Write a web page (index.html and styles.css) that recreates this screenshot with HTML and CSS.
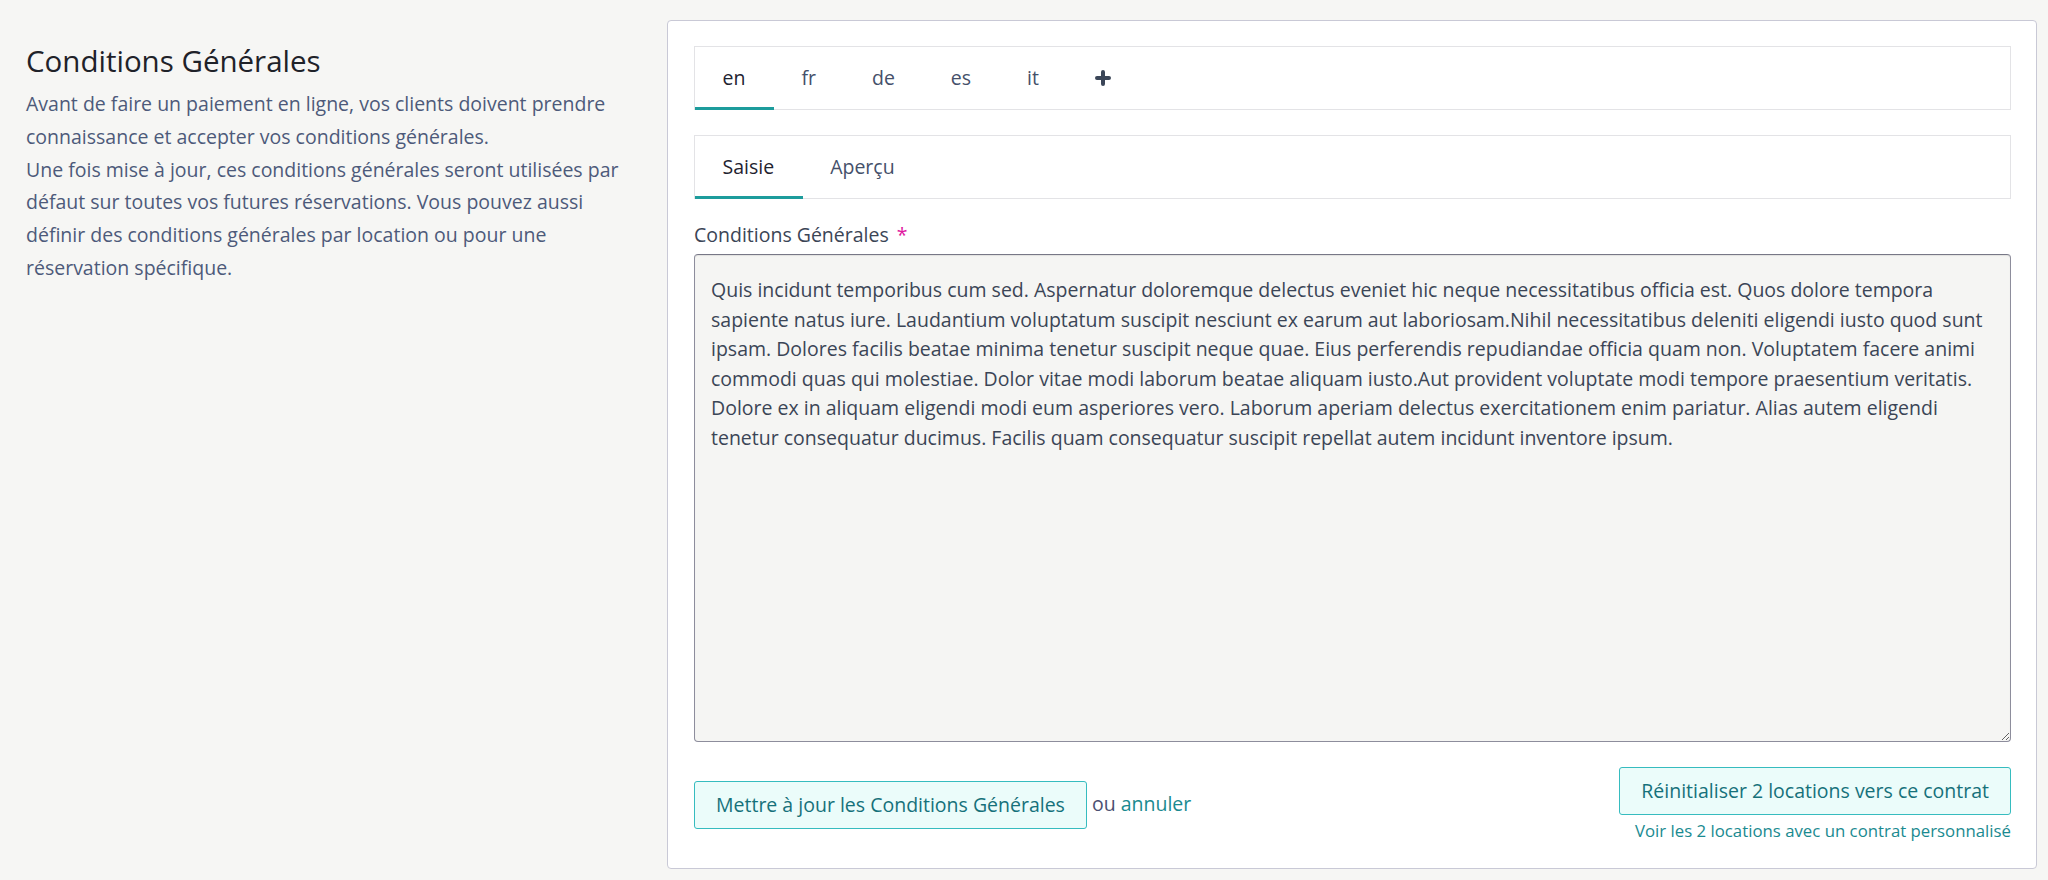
FILE: index.html
```html
<!DOCTYPE html>
<html lang="fr">
<head>
<meta charset="utf-8">
<title>Conditions Générales</title>
<link rel="stylesheet" href="styles.css">
</head>
<body>
<div class="page">
  <section class="intro">
    <h2 class="intro-title">Conditions Générales</h2>
    <p class="intro-text">Avant de faire un paiement en ligne, vos clients doivent prendre connaissance et accepter vos conditions générales.<br>Une fois mise à jour, ces conditions générales seront utilisées par défaut sur toutes vos futures réservations. Vous pouvez aussi définir des conditions générales par location ou pour une réservation spécifique.</p>
  </section>
  <section class="panel">
    <nav class="tabs">
      <a class="tab active">en</a>
      <a class="tab">fr</a>
      <a class="tab">de</a>
      <a class="tab">es</a>
      <a class="tab">it</a>
      <a class="tab tab-add"><svg width="16" height="16" viewBox="0 0 16 16"><path d="M8 2v12M2 8h12" stroke="#3b4658" stroke-width="4" stroke-linecap="round"/></svg></a>
    </nav>
    <nav class="tabs">
      <a class="tab active">Saisie</a>
      <a class="tab">Aperçu</a>
    </nav>
    <label class="field-label">Conditions Générales <span class="req">*</span></label>
    <textarea class="field">Quis incidunt temporibus cum sed. Aspernatur doloremque delectus eveniet hic neque necessitatibus officia est. Quos dolore tempora sapiente natus iure. Laudantium voluptatum suscipit nesciunt ex earum aut laboriosam.Nihil necessitatibus deleniti eligendi iusto quod sunt ipsam. Dolores facilis beatae minima tenetur suscipit neque quae. Eius perferendis repudiandae officia quam non. Voluptatem facere animi commodi quas qui molestiae. Dolor vitae modi laborum beatae aliquam iusto.Aut provident voluptate modi tempore praesentium veritatis. Dolore ex in aliquam eligendi modi eum asperiores vero. Laborum aperiam delectus exercitationem enim pariatur. Alias autem eligendi tenetur consequatur ducimus. Facilis quam consequatur suscipit repellat autem incidunt inventore ipsum.</textarea>
    <div class="actions">
      <div class="actions-left">
        <button class="btn">Mettre à jour les Conditions Générales</button>
        <span class="or">ou <a class="link">annuler</a></span>
      </div>
      <div class="actions-right">
        <button class="btn">Réinitialiser 2 locations vers ce contrat</button>
        <a class="link small">Voir les 2 locations avec un contrat personnalisé</a>
      </div>
    </div>
  </section>
</div>
</body>
</html>
```

FILE: styles.css
```css
html, body {
  margin: 0;
  padding: 0;
}
body {
  background: #f6f6f4;
  font-family: "Open Sans", "Noto Sans", sans-serif;
  color: #3b4556;
}
.page {
  display: flex;
  align-items: flex-start;
  padding: 20px 11px 13px 26px;
  gap: 31px;
}
.intro {
  width: 610px;
  flex: none;
  padding-top: 23px;
}
.intro-title {
  margin: 0;
  font-size: 29.5px;
  line-height: 36px;
  font-weight: 400;
  color: #1f2229;
}
.intro-text {
  margin: 9px 0 0;
  font-size: 19.5px;
  line-height: 32.8px;
  color: #4d5a7a;
}
.panel {
  flex: 1;
  background: #fff;
  border: 1px solid #c9c9d6;
  border-radius: 4px;
  padding: 25px 25px 25px 26px;
  display: flex;
  flex-direction: column;
}
.tabs {
  display: flex;
  border: 1px solid #e3e3e6;
  height: 62px;
  margin-bottom: 25px;
}
.tab {
  display: flex;
  align-items: center;
  padding: 0 28.5px 0 27.5px;
  font-size: 19.5px;
  color: #45506a;
  border-bottom: 3px solid transparent;
  margin-bottom: -1px;
  cursor: pointer;
}
.tab.active {
  color: #1f2330;
  border-bottom-color: #1d9c9c;
}
.tab-add {
  padding-top: 2px;
}
.field-label {
  font-size: 19.5px;
  line-height: 27px;
  color: #3b4556;
  margin: -3px 0 6px;
}
.req {
  color: #e0199f;
  margin-left: 3px;
}
.field {
  display: block;
  box-sizing: border-box;
  width: 100%;
  height: 488px;
  margin: 0;
  padding: 20px 16px 16px;
  font-family: "Open Sans", "Noto Sans", sans-serif;
  font-size: 19.5px;
  line-height: 29.5px;
  color: #3b4556;
  background: #f5f5f3;
  border: 1px solid #8d8d9c;
  border-top-color: #777786;
  border-radius: 4px;
  box-shadow: inset 0 1px 1px rgba(0,0,0,0.08);
  resize: vertical;
  outline: none;
}
.actions {
  display: flex;
  justify-content: space-between;
  align-items: center;
  margin-top: 25px;
}
.actions-left {
  display: flex;
  align-items: center;
  gap: 5px;
}
.actions-right {
  display: flex;
  flex-direction: column;
  align-items: flex-end;
  gap: 4px;
}
.btn {
  font-family: "Open Sans", "Noto Sans", sans-serif;
  font-size: 19.5px;
  line-height: 24px;
  color: #16717a;
  background: #ebfcfa;
  border: 1.5px solid #36bcbf;
  border-radius: 3px;
  padding: 11px 21px;
  cursor: pointer;
}
.or {
  font-size: 19.5px;
  color: #4b5072;
  margin-top: -3px;
}
.link {
  color: #1a8a90;
  text-decoration: none;
  cursor: pointer;
}
.link.small {
  font-size: 16.8px;
  line-height: 24px;
}
```
